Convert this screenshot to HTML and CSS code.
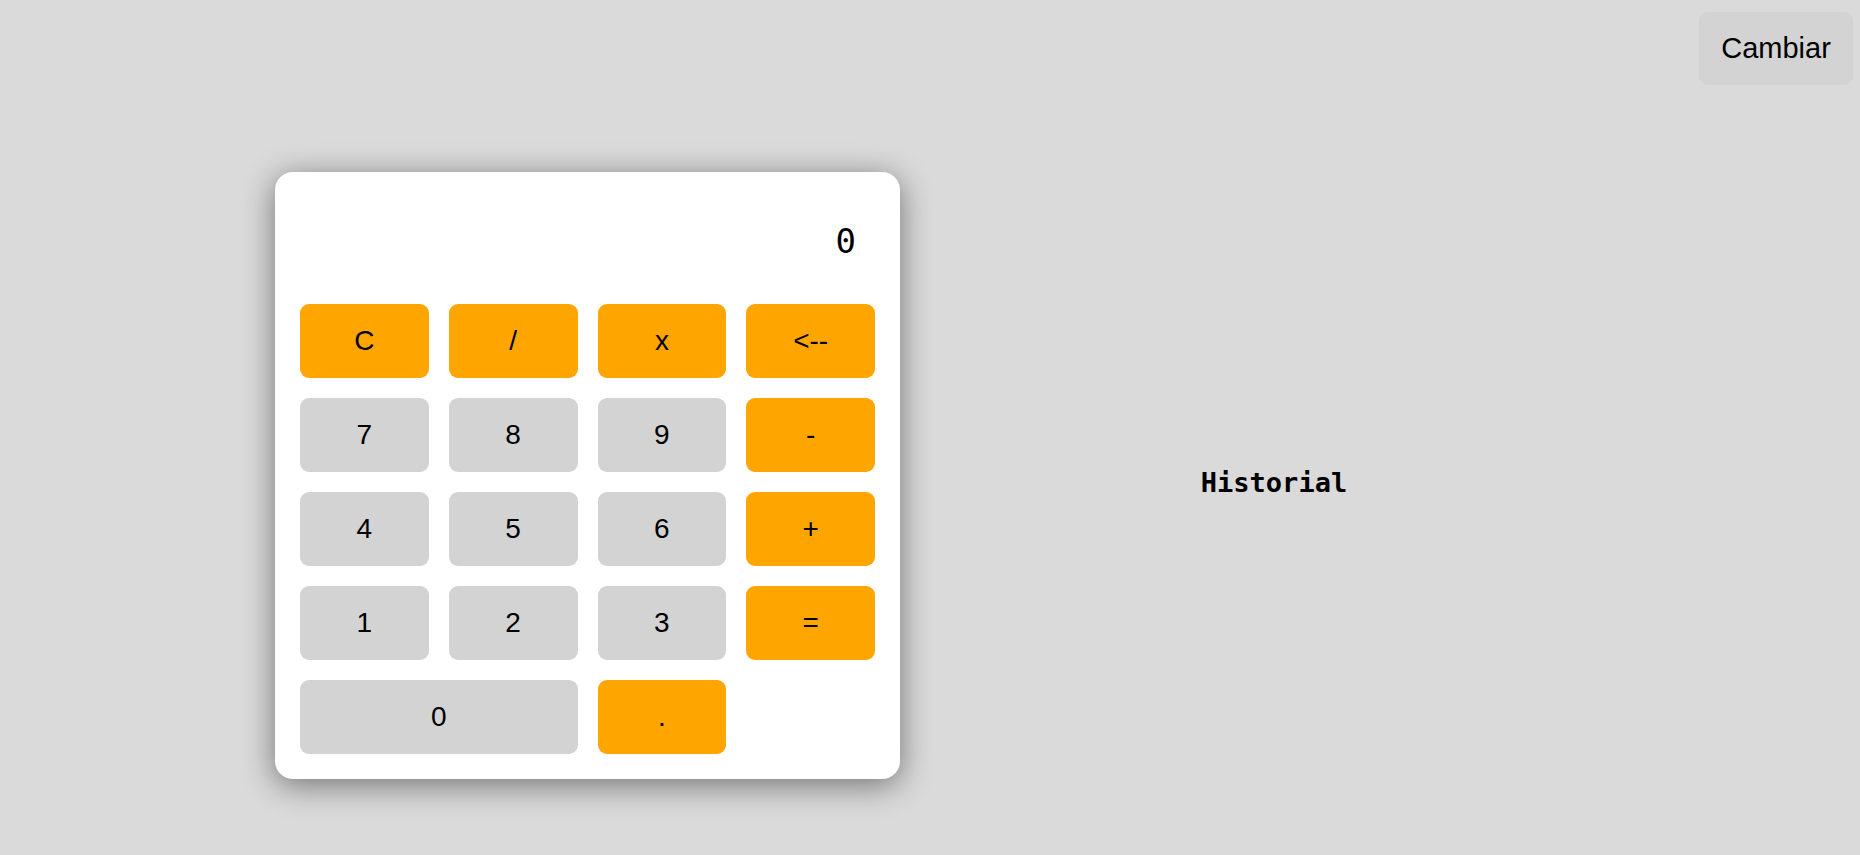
FILE: index.html
```html
<!DOCTYPE html>
<html lang="es">
<head>
<meta charset="utf-8">
<title>Calculadora</title>
<link rel="stylesheet" href="styles.css">
</head>
<body>
<header class="topbar">
  <button class="switch">Cambiar</button>
</header>
<main class="main">
  <section class="calc">
    <div class="display">0</div>
    <div class="keys">
      <button class="key op">C</button>
      <button class="key op">/</button>
      <button class="key op">x</button>
      <button class="key op">&lt;--</button>
      <button class="key">7</button>
      <button class="key">8</button>
      <button class="key">9</button>
      <button class="key op">-</button>
      <button class="key">4</button>
      <button class="key">5</button>
      <button class="key">6</button>
      <button class="key op">+</button>
      <button class="key">1</button>
      <button class="key">2</button>
      <button class="key">3</button>
      <button class="key op">=</button>
      <button class="key wide">0</button>
      <button class="key op">.</button>
    </div>
  </section>
  <section class="history">
    <h2 class="history-title">Historial</h2>
  </section>
</main>
</body>
</html>
```
FILE: styles.css
```css
html, body {
  margin: 0;
  padding: 0;
}
body {
  background: #dadada;
  font-family: "Liberation Sans", Arial, sans-serif;
  height: 855px;
  overflow: hidden;
}
.topbar {
  display: flex;
  justify-content: flex-end;
  padding: 12px 7px 0 0;
  height: 73px;
}
.switch {
  width: 154px;
  height: 73px;
  border: none;
  border-radius: 9px;
  background: #d3d3d3;
  color: #000;
  font-family: "Liberation Sans", Arial, sans-serif;
  font-size: 29px;
  padding: 0;
}
.main {
  display: flex;
  align-items: center;
  padding: 11px 0 0 275px;
  box-sizing: border-box;
  height: 770px;
}
.calc {
  width: 625px;
  box-sizing: border-box;
  padding: 25px;
  background: #fff;
  border-radius: 18px;
  box-shadow: 0 6px 32px rgba(0, 0, 0, 0.48);
}
.display {
  height: 87px;
  margin-bottom: 20px;
  display: flex;
  align-items: center;
  justify-content: flex-end;
  padding-right: 19px;
  font-family: "DejaVu Sans Mono", monospace;
  font-size: 34px;
  color: #000;
}
.keys {
  display: grid;
  grid-template-columns: repeat(4, 1fr);
  grid-auto-rows: 74px;
  gap: 20px;
}
.key {
  border: none;
  border-radius: 9px;
  background: #d3d3d3;
  color: #000;
  font-family: "Liberation Sans", Arial, sans-serif;
  font-size: 28px;
  padding: 0;
}
.key.op {
  background: #ffa500;
}
.key.wide {
  grid-column: span 2;
}
.history {
  width: 300px;
  margin-left: 224px;
  padding-top: 13px;
  text-align: center;
}
.history-title {
  margin: 0;
  font-family: "DejaVu Sans Mono", monospace;
  font-weight: bold;
  font-size: 27px;
  color: #000;
}
```
